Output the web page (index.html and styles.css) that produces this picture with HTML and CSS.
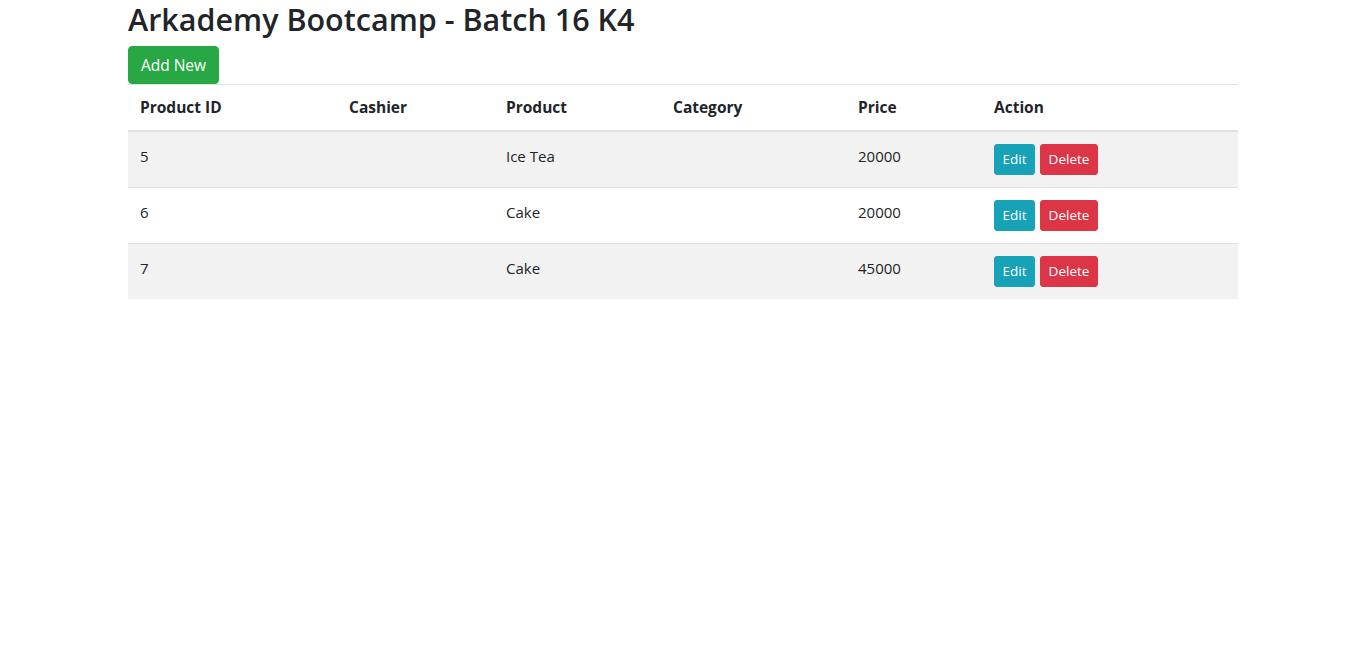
FILE: index.html
```html
<!DOCTYPE html>
<html lang="en">
<head>
<meta charset="utf-8">
<title>Arkademy Bootcamp</title>
<link rel="stylesheet" href="styles.css">
</head>
<body>
<div class="container">
  <h2 class="title">Arkademy Bootcamp - Batch 16 K4</h2>
  <button class="btn btn-success">Add New</button>
  <table class="table">
    <colgroup>
      <col class="c1"><col class="c2"><col class="c3"><col class="c4"><col class="c5"><col class="c6">
    </colgroup>
    <thead>
      <tr><th>Product ID</th><th>Cashier</th><th>Product</th><th>Category</th><th>Price</th><th>Action</th></tr>
    </thead>
    <tbody>
      <tr class="odd"><td>5</td><td></td><td>Ice Tea</td><td></td><td>20000</td><td><div class="actions"><button class="btn btn-sm btn-info">Edit</button><button class="btn btn-sm btn-danger">Delete</button></div></td></tr>
      <tr><td>6</td><td></td><td>Cake</td><td></td><td>20000</td><td><div class="actions"><button class="btn btn-sm btn-info">Edit</button><button class="btn btn-sm btn-danger">Delete</button></div></td></tr>
      <tr class="odd"><td>7</td><td></td><td>Cake</td><td></td><td>45000</td><td><div class="actions"><button class="btn btn-sm btn-info">Edit</button><button class="btn btn-sm btn-danger">Delete</button></div></td></tr>
    </tbody>
  </table>
</div>
</body>
</html>
```
FILE: styles.css
```css
* { box-sizing: border-box; }
html, body { margin: 0; padding: 0; background: #fff; }
body {
  font-family: "Open Sans", "Noto Sans", sans-serif;
  font-size: 15px;
  line-height: 1.5;
  color: #212529;
}
.container {
  width: 1110px;
  margin-left: 128px;
}
.title {
  margin: 0 0 8px 0;
  font-size: 30.5px;
  font-weight: 600;
  line-height: 38px;
}
.btn {
  display: inline-block;
  font-family: inherit;
  border: 1px solid transparent;
  color: #fff;
  cursor: pointer;
}
.btn-success {
  background: #28a745;
  border-color: #28a745;
  font-size: 15.5px;
  line-height: 24px;
  padding: 6px 0;
  text-align: center;
  border-radius: 4px;
  width: 91px;
  height: 38px;
  display: block;
}
.table {
  width: 1110px;
  border-collapse: collapse;
  table-layout: fixed;
  border-top: 1px solid #dee2e6;
}
.c1 { width: 209px; }
.c2 { width: 157px; }
.c3 { width: 167px; }
.c4 { width: 185px; }
.c5 { width: 136px; }
.c6 { width: 256px; }
.table th {
  text-align: left;
  font-weight: 700;
  padding: 12px;
  line-height: 21px;
  font-size: 15.5px;
  border-bottom: 2px solid #dee2e6;
}
.table td {
  padding: 12px;
  vertical-align: top;
  border-top: 1px solid #dee2e6;
  font-size: 15px;
  line-height: 24px;
}
.table thead + tbody tr:first-child td { border-top: 0; }
.table tr.odd td { background: #f2f2f2; }
.actions { display: flex; gap: 5px; height: 31px; }
.btn-sm {
  font-size: 13.5px;
  line-height: 21px;
  padding: 4px 0;
  text-align: center;
  border-radius: 3px;
  height: 31px;
}
.btn-info { background: #17a2b8; border-color: #17a2b8; width: 41px; }
.btn-danger { background: #dc3545; border-color: #dc3545; width: 58px; }
```
